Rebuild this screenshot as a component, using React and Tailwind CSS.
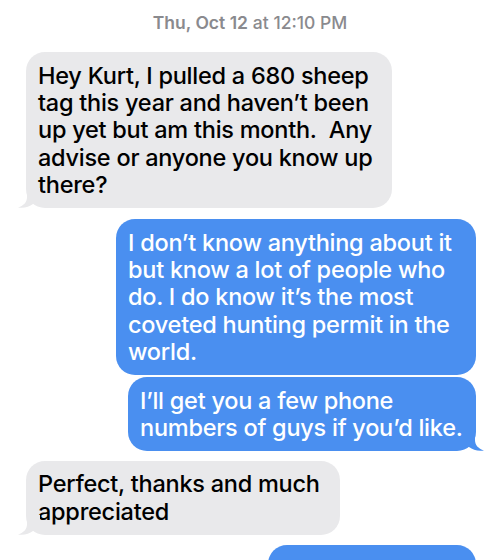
import React from 'react';

const Tail = ({ side, color }) => (
  <svg
    className={`absolute bottom-0 ${side === 'left' ? '-left-[8px]' : '-right-[8px] -scale-x-100'}`}
    width="22"
    height="20"
    viewBox="0 0 22 20"
  >
    <path d="M9 0 L9 9 C9 14 6 17.5 0 19.5 C6 20.5 11 19 15 16 L22 16 L22 0 Z" fill={color} />
  </svg>
);

// each message is given as its wrapped lines
const Bubble = ({ from, width, tail, lines, children }) => {
  const mine = from === 'me';
  const color = mine ? '#4a8ff0' : '#e9e9eb';
  return (
    <div className={`flex ${mine ? 'justify-end' : 'justify-start'}`}>
      <div
        className={`relative rounded-[19px] px-[12px] py-[9.5px] text-[23.5px] leading-[27.4px] font-medium tracking-[-0.25px] whitespace-nowrap ${width} ${
          mine ? 'bg-[#4a8ff0] text-white' : 'bg-[#e9e9eb] text-black'
        }`}
      >
        {lines && lines.map((l, i) => <div key={i}>{l}</div>)}
        {children}
        {tail && <Tail side={mine ? 'right' : 'left'} color={color} />}
      </div>
    </div>
  );
};

export default function App() {
  return (
    <div className="h-[560px] w-[500px] overflow-hidden bg-white px-[24px] font-['Inter','Liberation_Sans',sans-serif]">
      <div className="pt-[12px] text-center text-[17.5px] leading-[22px] text-[#8a8a8e]">
        <span className="font-semibold">Thu, Oct 12</span> <span className="font-medium">at 12:10 PM</span>
      </div>

      <div className="mt-[18px] flex flex-col">
        <div className="pl-[2px]">
          <Bubble
            from="them"
            width="w-[366px]"
            tail
            lines={[
              'Hey Kurt, I pulled a 680 sheep',
              'tag this year and haven’t been',
              'up yet but am this month.\u00a0 Any',
              'advise or anyone you know up',
              'there?',
            ]}
          />
        </div>

        <div className="mt-[11px]">
          <Bubble
            from="me"
            width="w-[360px]"
            lines={[
              'I don’t know anything about it',
              'but know a lot of people who',
              'do. I do know it’s the most',
              'coveted hunting permit in the',
              'world.',
            ]}
          />
        </div>
        <div className="mt-[2px]">
          <Bubble
            from="me"
            width="w-[348px]"
            tail
            lines={['I’ll get you a few phone', 'numbers of guys if you’d like.']}
          />
        </div>

        <div className="mt-[10px] pl-[2px]">
          <Bubble from="them" width="w-[314px]" tail lines={['Perfect, thanks and much', 'appreciated']} />
        </div>

        <div className="mt-[10px]">
          <Bubble from="me" width="w-[208px]">
            <div className="h-[54px]" />
          </Bubble>
        </div>
      </div>
    </div>
  );
}
